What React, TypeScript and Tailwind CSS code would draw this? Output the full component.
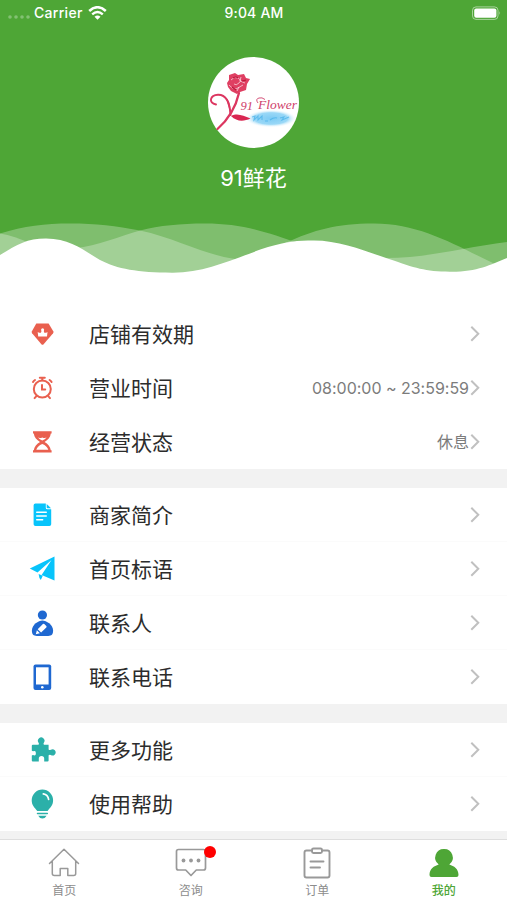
import React from "react";

const GREEN = "#4ea636";

function Gem() {
  return (
    <svg width="28" height="28" viewBox="0 0 28 28">
      <path d="M8.300 3.400H20.600L25.400 11.600Q25.700 12.500 25.100 13.300L15.600 24.200Q14.500 25.400 13.400 24.200L4.100 13.300Q3.500 12.500 3.800 11.600Z" fill="#e9604f" />
      <circle cx="14.600" cy="9.700" r="1.500" fill="#fff" />
      <path d="M13.900 10h1.500l.9 2.800q1.500.3 3.200-.9l-.5 4.600h-8.800l-.5-4.600q1.700 1.200 3.200.9Z" fill="#fff" />
    </svg>
  );
}

function Clock() {
  return (
    <svg width="28" height="28" viewBox="0 0 28 28" fill="none" stroke="#e9604f" strokeWidth="2" strokeLinecap="round">
      <circle cx="14.300" cy="15" r="8.500" />
      <path d="M11.800 3.800h5M14.300 4v2.200M5 8A6 6 0 0 1 7 6M23.600 8A6 6 0 0 0 21.600 6M8.200 22.300l-1.600 1.800M20.400 22.300l1.600 1.800M14 10.900v4.700h3.200" />
    </svg>
  );
}

function Hourglass() {
  return (
    <svg width="28" height="28" viewBox="0 0 28 28">
      <path d="M5 3.300h18.600v2.200h-.8c-.4 4-3 6.500-6.200 8.400 3.200 1.900 5.800 4.400 6.200 8.400h.8v2.200H5v-2.200h.8c.4-4 3-6.500 6.200-8.400-3.200-1.900-5.800-4.400-6.200-8.400H5Z" fill="#e9604f" />
      <path d="M10 9.600q2 .9 4.300-.2 2.300 1.100 4.300.2-1.600 1.900-4.300 3-2.700-1.100-4.300-3ZM14.300 16c3.200 1.300 5.200 3.200 6 5.800h-12c.8-2.600 2.800-4.500 6-5.800Z" fill="#fff" />
    </svg>
  );
}

function Doc() {
  return (
    <svg width="28" height="28" viewBox="0 0 28 28">
      <path d="M7.400 2.500h10.400v4.200q0 1.600 1.600 1.600h3.800v14.900a1.800 1.800 0 0 1-1.800 1.800h-14A1.800 1.800 0 0 1 5.600 23.200V4.300A1.800 1.800 0 0 1 7.400 2.500Z" fill="#08c4fb" />
      <path d="M18.700 2.900 23 7.300h-3.500q-.8 0-.8-.8Z" fill="#08c4fb" />
      <path d="M8.700 11.200h9.600M8.700 15h9.600M8.700 18.800h6" stroke="#fff" strokeWidth="1.400" strokeLinecap="round" />
    </svg>
  );
}

function Plane() {
  return (
    <svg width="28" height="28" viewBox="0 0 28 28" fill="#08c4fb">
      <path d="M26.500 1.500 1.800 13.500l7.700 4L23.500 5 13.600 20l12.900 5.400Z" />
      <path d="m10.600 19 4.200 1.800-2 4.200q-1.800-1.600-2.200-6Z" />
    </svg>
  );
}

function Contact() {
  return (
    <svg width="28" height="28" viewBox="0 0 28 28">
      <circle cx="14.400" cy="6" r="4.600" fill="#1f68d1" />
      <path d="M14.400 11.600c3.800 0 10.700 4.300 10.700 10 0 4-1.600 5.400-4.900 5.400H8.800c-3.300 0-4.900-1.400-4.900-5.400 0-5.700 6.700-10 10.500-10Z" fill="#1f68d1" />
      <path d="m9.700 20.200 5.200-5.200q.7-.7 1.400 0l2 2q.7.700 0 1.400l-5.200 5.200-3.400-3.400ZM8.900 21.200l3 3-4.100 1.100Z" fill="#fff" />
    </svg>
  );
}

function Phone() {
  return (
    <svg width="28" height="28" viewBox="0 0 28 28">
      <rect x="5.500" y="1.400" width="17.700" height="25.600" rx="2" fill="#1f68d1" />
      <rect x="8" y="4.300" width="12.600" height="17.200" fill="#fff" />
      <circle cx="14.300" cy="24.200" r="1.300" fill="#fff" />
    </svg>
  );
}

function Puzzle() {
  return (
    <svg width="28" height="28" viewBox="0 0 28 28" fill="#2bb0a9">
      <path d="M4.800 8.700h5.600q1-.7 0-2.300a3.300 3.300 0 1 1 5.600 0q-1 1.600 0 2.300h4.600v4.900q.9.900 2.200.2a3.100 3.100 0 1 1 0 5.200q-1.300-.7-2.200.2v5.300q0 1.100-1.100 1.100h-3.300v-3q0-2.600-2.700-2.600t-2.700 2.600v3H4.800q-1 0-1-1.100v-5q.9-.7 2.100-.2 2 .5 2-2.100t-2-2.100q-1.200.5-2.100-.3V9.800q0-1.100 1-1.100Z" />
    </svg>
  );
}

function Bulb() {
  return (
    <svg width="28" height="32" viewBox="0 0 28 32">
      <path d="M14.400 1.500a10.700 10.700 0 0 1 10.700 10.700c0 5.200-3 7.300-5.500 10.800H9.200C6.700 19.500 3.700 17.400 3.700 12.200A10.700 10.700 0 0 1 14.400 1.500Z" fill="#2bb0a9" />
      <path d="M15.300 5.800a6.500 6.500 0 0 1 5.300 5.600" fill="none" stroke="#fff" strokeWidth="1.700" strokeLinecap="round" />
      <path d="M9.500 25.500h9.800" stroke="#2bb0a9" strokeWidth="1.500" strokeLinecap="round" />
      <path d="M10.200 27.700h8.400q-1.400 2.800-4.200 2.800t-4.200-2.800Z" fill="#2bb0a9" />
    </svg>
  );
}

function Row({ icon, label, value, line }: { icon: React.ReactNode; label: string; value?: string; line?: boolean }) {
  return (
    <div className={"flex h-[54px] items-center pl-[28px] pr-[26px] " + (line ? "border-b border-[#fbfbfb]" : "")}>
      <div className="flex w-[61px] items-center">{icon}</div>
      <div className="flex-1 pt-[2px] text-[21px] leading-[30px] text-[#2c2c2c]">{label}</div>
      <div className="text-[16px] leading-6 tracking-[-0.02px] text-[#7c7c7c]">{value}</div>
      <svg width="12" height="18" viewBox="0 0 12 18" fill="none" stroke="#c0c0c0" strokeWidth="2">
        <path d="m2.300 1.800 7 7-7 7" />
      </svg>
    </div>
  );
}

function Tab({ label, active, children }: { label: string; active?: boolean; children: React.ReactNode }) {
  return (
    <div className={"flex flex-1 flex-col items-center pt-[6px] text-[12px] leading-[18px] " + (active ? "font-medium text-[#4ea636]" : "text-[#8c8c8c]")}>
      <div className="relative h-[38px] w-[34px]">{children}</div>
      <span className="pt-px">{label}</span>
    </div>
  );
}

function Logo() {
  return (
    <svg width="91" height="91" viewBox="0 0 91 91">
      <defs>
        <radialGradient id="pool">
          <stop offset="0" stopColor="#7dcbf4" />
          <stop offset=".65" stopColor="#9ad8f7" />
          <stop offset="1" stopColor="#fff" stopOpacity="0" />
        </radialGradient>
      </defs>
      <circle cx="45.500" cy="45.500" r="45.500" fill="#fff" />
      <ellipse cx="63" cy="61.500" rx="26" ry="9" fill="url(#pool)" />
      <path d="M44 60l3-1-1 4 4-4v4l4-4v4M57 64h3M62 63q4-3 7-2M72 61l4-1-2 3 7-3" fill="none" stroke="#41aee8" strokeWidth="1.100" opacity=".65" />
      <g fill="none" stroke="#dc3660" strokeLinecap="round">
        <path d="M8 47.500C0 46 2 38 10 37.700C19 37.500 22 48 22.500 58" strokeWidth="1.900" />
        <path d="M31 36C28.500 47 22 61 9.500 72" strokeWidth="2.300" />
      </g>
      <path d="M17 40C22 43 23 50 22 57C21 50 19 44 17 40Z" fill="#dc3660" />
      <path d="M23 59C30 55.500 35 59 42.500 61.500C36 64.500 29 65 23 59Z" fill="#d92752" />
      <path d="m21 18 6-2 3 2 6-1 2 4 4 1-3 5-1 6-6 2-3 2-6-3-3-4-1-4 2-3Z" fill="#df3f62" />
      <path d="M23 23q3-4 7-2t1 5-5 1M21 28q3 4 7 4l7-4M33 20l-1 4 5 2M29 34l2-4" fill="none" stroke="#fff" strokeWidth=".8" opacity=".75" />
      <path d="M25 21q3-2 5 0M24 30l4 3M34 24l4-1" fill="none" stroke="#b91439" strokeWidth="1.200" />
      <text x="32.500" y="52.500" fill="#cf3f6b" fontFamily="'Liberation Serif', serif" fontStyle="italic" fontSize="12.500">91</text>
      <text x="50" y="52" fill="#cf3f6b" fontFamily="'Liberation Serif', serif" fontStyle="italic" fontSize="13.500">Flower</text>
      <path d="M50 46q-3-4 1-5 3-1 6 1.500" fill="none" stroke="#cf3f6b" strokeWidth=".9" />
    </svg>
  );
}

export default function App() {
  return (
    <div className="flex h-[900px] w-[507px] flex-col overflow-hidden bg-white font-[Inter,'Noto_Sans_CJK_SC',sans-serif]">
      <header className="flex h-[307px] shrink-0 flex-col bg-white">
        <div className="flex h-[222px] flex-col bg-[#4ea636] text-white">
          <div className="grid h-[26px] grid-cols-3 items-center px-2 text-[14px] font-medium leading-5">
            <div className="flex items-center">
              <svg width="26" height="16" viewBox="0 0 26 16" fill="#fff" opacity=".3">
                <circle cx="2" cy="12" r="1.800" /><circle cx="8" cy="12" r="1.800" /><circle cx="14" cy="12" r="1.800" /><circle cx="20" cy="12" r="1.800" />
              </svg>
              <span className="tracking-[0.300px]">Carrier</span>
              <svg className="ml-[5px]" width="19" height="14" viewBox="0 0 19 14">
                <path d="M1.200 5Q9.500-2.500 17.800 5" fill="none" stroke="#fff" strokeWidth="2.600" />
                <path d="M4.200 8.300q5.300-4.600 10.600 0" fill="none" stroke="#fff" strokeWidth="2.400" />
                <path d="M6.500 10.700q3-2.500 6 0l-3 3Z" fill="#fff" />
              </svg>
            </div>
            <div className="pl-px text-center tracking-[0.200px]">9:04 AM</div>
            <svg className="-mr-[2px] justify-self-end" width="30" height="14" viewBox="0 0 30 14">
              <rect x="1.500" y=".9" width="25.500" height="12.500" rx="3.500" fill="none" stroke="#fff" opacity=".5" />
              <rect x="3.200" y="2.600" width="22.200" height="9.200" rx="2" fill="#fff" />
              <path d="M28.300 5q1.600 2 0 4Z" fill="#fff" opacity=".5" />
            </svg>
          </div>
          <div className="mt-[31px] flex flex-col items-center">
            <Logo />
            <div className="mt-[14px] text-[22px] leading-[32px]">91鲜花</div>
          </div>
        </div>
        <svg className="block" width="507" height="60" viewBox="0 222 507 60">
          <rect y="221" width="507" height="61" fill={GREEN} />
          <g fill="#fff" fillOpacity=".28">
            <path d="M0 233.500C24 226 45 223.500 70 223.500C96 223.500 116 226 140 230.500C175 238 205 255 235 259V282H0Z" />
            <path d="M0 233.500C10 235 20 239 30 243V282H0Z" />
            <path d="M75 248C98 246 120 236 140 230.500C160 225.500 180 223.500 205 223.500C240 223.500 265 231 300 244V282H75Z" />
            <path d="M285 243C315 230 335 223.500 374 223.500C420 223.500 455 245 495 264V282H285Z" />
            <path d="M380 258C425 259 465 247 507 242V282H380Z" />
          </g>
          <path d="M0 255C18 244 27 238.500 46 238.500C70 238.500 83 250 100 260C117 269 138 272.500 172 272.700C207 273 237 257 268 247C287 241.500 297 240.500 314 240.500C340 240.500 365 251 389 259C415 268 425 271.500 450 271.700C477 272 490 265 507 258V283H0Z" fill="#fff" />
        </svg>
      </header>

      <main className="h-[532px] shrink-0 bg-[#f2f2f2]">
        <section className="bg-white">
          <Row icon={<Gem />} label="店铺有效期" />
          <Row icon={<Clock />} label="营业时间" value="08:00:00 ~ 23:59:59" />
          <Row icon={<Hourglass />} label="经营状态" value="休息" />
        </section>
        <section className="mt-[19px] bg-white">
          <Row icon={<Doc />} label="商家简介" line />
          <Row icon={<Plane />} label="首页标语" line />
          <Row icon={<Contact />} label="联系人" line />
          <Row icon={<Phone />} label="联系电话" />
        </section>
        <section className="mt-[19px] bg-white">
          <Row icon={<Puzzle />} label="更多功能" line />
          <Row icon={<Bulb />} label="使用帮助" />
        </section>
      </main>

      <nav className="flex h-[61px] shrink-0 border-t border-[#dedede] bg-white pl-px">
        <Tab label="首页">
          <svg width="34" height="34" viewBox="0 0 34 34" fill="none" stroke="#999" strokeWidth="1.500" strokeLinejoin="round" strokeLinecap="round">
            <path d="M2.500 17.500 17 3.200l14.500 14.300M5.300 15v12.500q0 2 2 2H13.200v-7h7.600v7h5.900q2 0 2-2V15" />
          </svg>
        </Tab>
        <Tab label="咨询">
          <svg width="34" height="34" viewBox="0 0 34 34">
            <path d="M4.500 3.500h25q2 0 2 2v16.500q0 2-2 2h-7.200L17 29.500l-5.300-5.500H4.500q-2 0-2-2v-16.500q0-2 2-2Z" fill="none" stroke="#999" strokeWidth="1.700" strokeLinejoin="round" />
            <g fill="#999"><circle cx="9.500" cy="14.500" r="1.900" /><circle cx="17" cy="14.500" r="1.900" /><circle cx="24.500" cy="14.500" r="1.900" /></g>
          </svg>
          <span className="absolute -right-[8px] top-0 size-[12px] rounded-full bg-[#f00]" />
        </Tab>
        <Tab label="订单">
          <svg width="34" height="34" viewBox="0 0 34 34" fill="none" stroke="#999" strokeWidth="1.900" strokeLinecap="round">
            <path d="M12 4.500H6.500q-2 0-2 2v23q0 2 2 2h21q2 0 2-2v-23q0-2-2-2H22M10.500 15.500h13M10.500 21.500H20" />
            <rect x="12" y="2.500" width="10" height="4.500" rx="1.500" />
          </svg>
        </Tab>
        <Tab label="我的" active>
          <svg width="34" height="34" viewBox="0 0 34 34" fill={GREEN}>
            <path d="M17 2.900a8.600 8.600 0 0 1 5.300 15.500C27 20 31.500 22.500 31.500 29q0 2-2 2h-25q-2 0-2-2C2.500 22.500 7 20 11.700 18.400A8.600 8.600 0 0 1 17 2.900Z" />
          </svg>
        </Tab>
      </nav>
    </div>
  );
}
